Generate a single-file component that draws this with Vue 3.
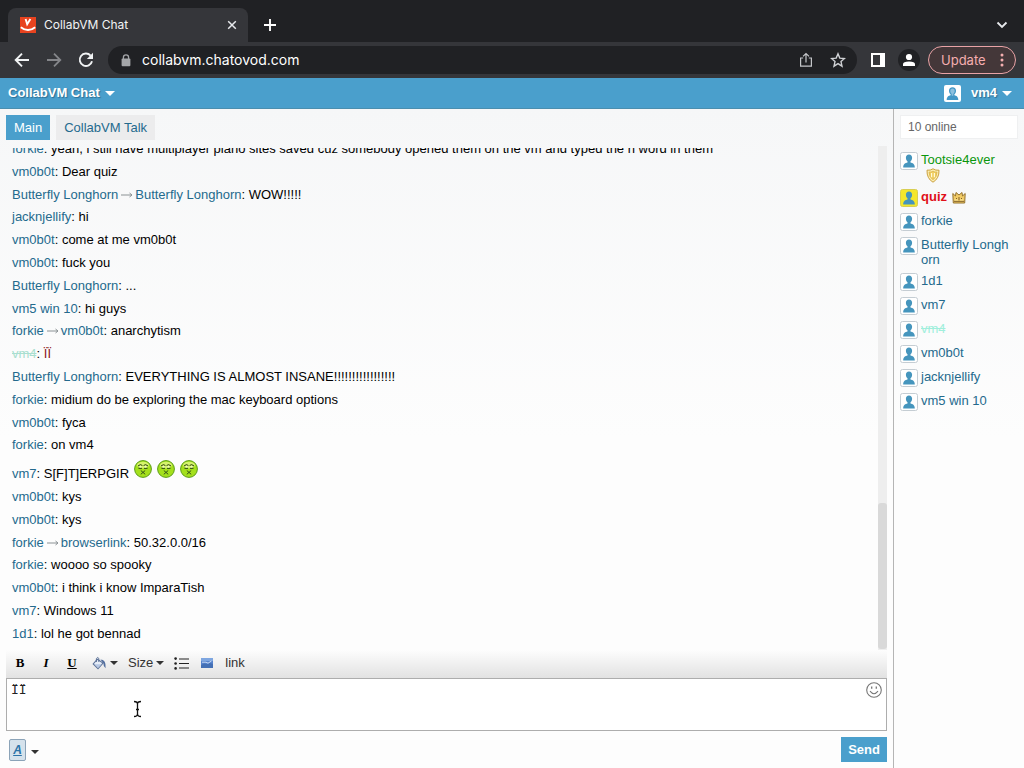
<script setup>
import { ref } from 'vue'

const messages = [
  { from: 'forkie', text: 'yeah, i still have multiplayer piano sites saved cuz somebody opened them on the vm and typed the n word in them' },
  { from: 'vm0b0t', text: 'Dear quiz' },
  { from: 'Butterfly Longhorn', to: 'Butterfly Longhorn', text: 'WOW!!!!!' },
  { from: 'jacknjellify', text: 'hi' },
  { from: 'vm0b0t', text: 'come at me vm0b0t' },
  { from: 'vm0b0t', text: 'fuck you' },
  { from: 'Butterfly Longhorn', text: '...' },
  { from: 'vm5 win 10', text: 'hi guys' },
  { from: 'forkie', to: 'vm0b0t', text: 'anarchytism' },
  { from: 'vm4', text: 'ÏÏ', self: true },
  { from: 'Butterfly Longhorn', text: 'EVERYTHING IS ALMOST INSANE!!!!!!!!!!!!!!!!!' },
  { from: 'forkie', text: 'midium do be exploring the mac keyboard options' },
  { from: 'vm0b0t', text: 'fyca' },
  { from: 'forkie', text: 'on vm4' },
  { from: 'vm7', text: 'S[F]T]ERPGIR', smileys: 3 },
  { from: 'vm0b0t', text: 'kys' },
  { from: 'vm0b0t', text: 'kys' },
  { from: 'forkie', to: 'browserlink', text: '50.32.0.0/16' },
  { from: 'forkie', text: 'woooo so spooky' },
  { from: 'vm0b0t', text: 'i think i know ImparaTish' },
  { from: 'vm7', text: 'Windows 11' },
  { from: '1d1', text: 'lol he got bennad' }
]

const users = [
  { name: 'Tootsie4ever', role: 'moderator' },
  { name: 'quiz', role: 'owner' },
  { name: 'forkie' },
  { name: 'Butterfly Longhorn' },
  { name: '1d1' },
  { name: 'vm7' },
  { name: 'vm4', role: 'self' },
  { name: 'vm0b0t' },
  { name: 'jacknjellify' },
  { name: 'vm5 win 10' }
]

const draft = ref('ÏÏ')
const filter = ref('')
const address = ref('collabvm.chatovod.com')
</script>

<template>
  <div class="window">
    <header class="browser">
      <div class="tabstrip">
        <div class="tab">
          <svg class="favicon" viewBox="0 0 16 16" aria-hidden="true">
            <rect width="16" height="16" fill="#e8431f" />
            <path d="M5.6 2 7.2 7.2 10.4 2" fill="none" stroke="#fff" stroke-width="1.9" />
            <path d="M.8 10.2Q8 16 15.2 10.200" fill="none" stroke="#fff" stroke-width="1.9" />
          </svg>
          <span class="tab-title">CollabVM Chat</span>
          <button class="plain" aria-label="Close tab">
            <svg width="10" height="10" viewBox="0 0 10 10"><path d="M1.2 1.2 8.8 8.8M8.8 1.2 1.2 8.8" stroke="#e8eaed" stroke-width="1.5" /></svg>
          </button>
        </div>
        <button class="plain new-tab" aria-label="New tab">
          <svg width="14" height="14" viewBox="0 0 14 14"><path d="M7 1V13M1 7H13" stroke="#fff" stroke-width="1.9" /></svg>
        </button>
        <button class="plain tab-search" aria-label="Search tabs">
          <svg width="12" height="8" viewBox="0 0 12 8"><path d="M1.5 1.5 6 6 10.5 1.5" fill="none" stroke="#e8eaed" stroke-width="1.8" /></svg>
        </button>
      </div>
      <div class="toolbar">
        <button class="plain" aria-label="Back">
          <svg width="16" height="16" viewBox="0 0 16 16"><path d="M15 8H2M8 1.7 1.7 8 8 14.3" fill="none" stroke="#f1f3f4" stroke-width="1.9" /></svg>
        </button>
        <button class="plain" aria-label="Forward">
          <svg width="16" height="16" viewBox="0 0 16 16"><path d="M1 8H14M8 1.7 14.3 8 8 14.3" fill="none" stroke="#85868a" stroke-width="1.8" /></svg>
        </button>
        <button class="plain" aria-label="Reload">
          <svg width="16" height="16" viewBox="0 0 16 16"><path d="M12.6 3.6A6.2 6.2 0 1 0 14 9.2" fill="none" stroke="#f1f3f4" stroke-width="1.9" /><path d="M15 .8V7H8.8Z" fill="#f1f3f4" /></svg>
        </button>
        <div class="omnibox">
          <svg width="10" height="13" viewBox="0 0 10 13"><path d="M2.4 5V3.4a2.6 2.6 0 0 1 5.2 0V5" fill="none" stroke="#a4a6a9" stroke-width="1.3" /><rect x=".6" y="4.6" width="8.8" height="7.6" rx="1" fill="#a4a6a9" /></svg>
          <input v-model="address" aria-label="Address">
          <button class="plain" aria-label="Share">
            <svg width="14" height="16" viewBox="0 0 14 16"><path d="M4.2 6H1.6V14.2H12.4V6H9.8M7 10.5V1.8M4 4.4 7 1.5 10 4.4" fill="none" stroke="#c4c6c9" stroke-width="1.2" /></svg>
          </button>
          <button class="plain" aria-label="Bookmark">
            <svg width="16" height="16" viewBox="0 0 16 16"><path d="M8 1.8 9.8 6.1 14.5 6.5 11 9.6 12 14.2 8 11.7 4 14.2 5 9.6 1.5 6.5 6.2 6.1Z" fill="none" stroke="#d0d2d5" stroke-width="1.4" /></svg>
          </button>
        </div>
        <button class="plain" aria-label="Side panel">
          <svg width="14" height="14" viewBox="0 0 14 14"><path fill-rule="evenodd" d="M0 0H14V14H0ZM2 2V12H9V2Z" fill="#fff" /></svg>
        </button>
        <button class="plain profile" aria-label="Profile">
          <svg width="14" height="14" viewBox="0 0 14 14"><circle cx="7" cy="4" r="3.1" fill="#fff" /><path d="M1 13V11.2Q1 8.4 7 8.4T13 11.2V13Z" fill="#fff" /></svg>
        </button>
        <button class="update">
          <span>Update</span>
          <svg width="4" height="14" viewBox="0 0 4 14" fill="#f5aeb0"><circle cx="2" cy="2" r="1.5" /><circle cx="2" cy="7" r="1.5" /><circle cx="2" cy="12" r="1.5" /></svg>
        </button>
      </div>
    </header>

    <nav class="site-bar">
      <button class="site-menu">CollabVM Chat<i class="caret"></i></button>
      <button class="site-menu">
        <svg class="account" viewBox="0 0 17 17"><rect width="17" height="17" rx="2" fill="#fff" /><path d="M8.500 2.200c2.200 0 3.500 1.400 3.500 3.500 0 1.800-.8 2.900-1.600 3.500v1c2 .6 3.900 1.300 3.900 4.800H2.700c0-3.500 1.900-4.200 3.900-4.800v-1C5.800 8.600 5 7.500 5 5.700c0-2.100 1.300-3.500 3.500-3.500Z" fill="#4297c6" /><path d="M8.500 3.600c1.400 0 2.200.9 2.200 2.300 0 1.500-.8 2.500-1.400 2.900v2H7.700v-2c-.6-.4-1.400-1.400-1.400-2.900 0-1.400.8-2.300 2.200-2.300Z" fill="#8cc0de" /></svg>
        vm4<i class="caret"></i>
      </button>
    </nav>

    <div class="content">
      <main class="chat">
        <div class="rooms">
          <a class="room active" href="#main">Main</a>
          <a class="room" href="#talk">CollabVM Talk</a>
        </div>

        <section class="log">
          <div class="viewport">
            <ol class="messages">
              <li v-for="(m, i) in messages" :key="i" :class="{ self: m.self }">
                <a class="nick" href="#">{{ m.from }}</a><template v-if="m.to"><svg class="arrow" viewBox="0 0 17 8"><path d="M3 4H14M11.500 2 14 4 11.500 6" fill="none" stroke="#8b9295" stroke-width="1" /></svg><a class="nick" href="#">{{ m.to }}</a></template>: <span class="text">{{ m.text }}</span>
                <svg v-for="n in m.smileys" :key="n" class="smiley" viewBox="0 0 18 18">
                  <circle cx="9" cy="9" r="8.4" fill="#a4e01c" stroke="#5c9d18" stroke-width="1" />
                  <ellipse cx="9" cy="5" rx="6" ry="3.3" fill="#d5f36c" />
                  <path d="M4 6Q6.500 3.500 8.400 5.500M14 6Q11.500 3.500 9.600 5.500M4.500 8.300H8M10 8.300H13.500" fill="none" stroke="#263c10" stroke-width="1" />
                  <path d="M5.500 6.900H7.500M10.500 6.900H12.500" stroke="#f6ffd8" stroke-width="1.200" />
                  <path d="M6.800 10.500 11.200 14.300M11.200 10.500 6.800 14.300" stroke="#33521a" stroke-width="1" />
                </svg>
              </li>
            </ol>
          </div>
          <div class="scrollbar"><div class="thumb"></div></div>
        </section>

        <form class="composer" @submit.prevent>
          <div class="format-bar">
            <button type="button" class="plain glyph bold">B</button>
            <button type="button" class="plain glyph italic">I</button>
            <button type="button" class="plain glyph underline">U</button>
            <button type="button" class="plain menu paint" aria-label="Text colour">
              <svg width="15" height="14" viewBox="0 0 15 14"><path d="M5.4 3.2 1.2 8 6 12.6 11 7Z" fill="#e6edf7" stroke="#5d7399" stroke-width="1.1" /><path d="M2.6 8.2H9.7L6 12Z" fill="#b7c8e4" /><path d="M4.4 6V2.6Q5.4.3 6.8 2.4V6" fill="none" stroke="#5d7399" stroke-width="1" /><path d="M8.4 3.4Q14.4 3.5 13.6 12.2 11.2 10.4 11.4 7.2Z" fill="#536f9f" /></svg>
              <i class="caret"></i>
            </button>
            <button type="button" class="plain menu size">Size<i class="caret"></i></button>
            <button type="button" class="plain list" aria-label="Bulleted list">
              <svg width="15" height="13" viewBox="0 0 15 13"><path d="M5 2H15M5 6.5H15M5 11H15" stroke="#222" stroke-width="1.2" /><circle cx="1.6" cy="1.6" r="1.3" fill="#222" /><circle cx="1.6" cy="6.5" r="1.3" fill="#222" /><circle cx="1.6" cy="11.4" r="1.3" fill="#222" /></svg>
            </button>
            <button type="button" class="plain image" aria-label="Image">
              <svg width="12" height="10" viewBox="0 0 12 10"><rect width="12" height="10" fill="#5683cd" /><rect width="12" height="3" fill="#7ea6e0" /><path d="M0 7 3.2 5.500 6 6.2 9 5 12 6V10H0Z" fill="#4470b5" /><path d="M1 4.2H5L7 5.2 10.5 3" fill="none" stroke="#d5e4f8" stroke-width=".9" /></svg>
            </button>
            <button type="button" class="plain link">link</button>
          </div>
          <div class="editor">
            <textarea v-model="draft" aria-label="Message" spellcheck="false"></textarea>
            <button type="button" class="plain emote" aria-label="Smileys">
              <svg width="16" height="16" viewBox="0 0 16 16"><circle cx="8" cy="8" r="7.3" fill="#fff" stroke="#777" stroke-width="1.1" /><path d="M5.7 4.6V6.8M10.3 4.6V6.8" stroke="#777" stroke-width="1.3" /><path d="M4 9.2Q8 14.2 12 9.2" fill="none" stroke="#777" stroke-width="1.1" /></svg>
            </button>
            <svg class="pointer" width="9" height="18" viewBox="0 0 9 18"><path d="M1 1.5Q4.5 1.5 4.5 4V14Q4.5 16.5 1 16.5M8 1.5Q4.5 1.5 4.5 4M4.5 14Q4.5 16.5 8 16.5M3 9.5H6" fill="none" stroke="#111" stroke-width="1.3" /></svg>
          </div>
          <div class="actions">
            <button type="button" class="style-toggle">A</button>
            <button type="button" class="plain" aria-label="Style options"><i class="caret"></i></button>
            <button type="submit" class="send">Send</button>
          </div>
        </form>
      </main>

      <aside class="people">
        <input v-model="filter" class="search" placeholder="10 online" aria-label="Filter users">
        <ul>
          <li v-for="u in users" :key="u.name" :class="u.role">
            <svg class="avatar" viewBox="0 0 18 18">
              <rect class="frame" x=".5" y=".5" width="17" height="17" rx="2" />
              <path d="M9 2.500c2 0 3.100 1.400 3.100 3.300 0 1.700-.8 2.900-1.600 3.500v1.100c2 .5 4.300 1.200 4.300 5.100H3.200c0-3.900 2.300-4.600 4.300-5.100V9.300c-.8-.6-1.600-1.800-1.600-3.500 0-1.900 1.100-3.300 3.100-3.300Z" fill="#4595bd" />
            </svg>
            <div class="who">
              <a href="#">{{ u.name }}</a><svg v-if="u.role === 'moderator'" class="badge" viewBox="0 0 14 15"><path d="M7 .8Q9.5 2.600 13 2.200 13.300 10.500 7 14.200.7 10.500 1 2.200 4.500 2.600 7 .8Z" fill="#fbeeb0" stroke="#cba040" stroke-width="1" /><path d="M7 3.200Q9 4.300 11 4.100 11 9 7 11.800 3 9 3 4.100 5 4.300 7 3.200Z" fill="#f0ce60" stroke="#d9ae43" stroke-width=".7" /><path d="M5.600 5V9.200M8.400 5V9.200" stroke="#fffbe0" stroke-width="1.100" /></svg><svg v-if="u.role === 'owner'" class="badge" viewBox="0 0 14 15"><path d="M1.300 13 .8 3.500 3.500 6 4 2.500 7 5 10 2.500 10.500 6 13.200 3.500 12.700 13Z" fill="#f1cb66" stroke="#94722d" stroke-width="1" /><path d="M2 11.300H12M4 8.500H5M9 8.500H10M7 7V10" stroke="#80612a" stroke-width="1" /><path d="M2.500 10H6M8 10H11.500" stroke="#fff0a8" stroke-width=".8" /></svg>
            </div>
          </li>
        </ul>
      </aside>
    </div>
  </div>
</template>

<style>
body {
  margin: 0;
  background: #fdfdfd;
}
</style>

<style scoped>
.window {
  display: flex;
  flex-direction: column;
  height: 100vh;
  overflow: hidden;
  font: 13px/16px "Liberation Sans", Arial, sans-serif;
  color: #000;
}
.window * { box-sizing: border-box; }
svg { flex: none; }
a { text-decoration: none; color: #246a8d; }
button, input, textarea { font: inherit; }
.plain {
  display: flex;
  align-items: center;
  padding: 0;
  border: 0;
  background: none;
  color: inherit;
}

/* browser */
.browser {
  flex: none;
  background: #202124;
  font-family: Inter, Roboto, sans-serif;
  color: #f1f3f4;
}
.tabstrip {
  display: flex;
  align-items: stretch;
  height: 42px;
  padding: 8px 16px 0 8px;
}
.tab {
  display: flex;
  align-items: center;
  gap: 8px;
  width: 240px;
  padding: 0 11px 0 12px;
  border-radius: 8px 8px 0 0;
  background: #35363a;
}
.favicon { width: 16px; height: 16px; }
.tab-title { flex: 1; font-size: 12px; }
.new-tab { margin-left: 15px; }
.tab-search { margin-left: auto; }
.toolbar {
  display: flex;
  align-items: center;
  gap: 16px;
  height: 36px;
  padding: 0 8px 0 14px;
  background: #35363a;
}
.omnibox {
  display: flex;
  flex: 1;
  align-items: center;
  height: 28px;
  margin: 0 -2px 0 -2px;
  padding: 0 11px 0 13px;
  gap: 17px;
  border-radius: 14px;
  background: #202124;
}
.omnibox input {
  flex: 1;
  min-width: 0;
  margin-left: -6px;
  padding: 0;
  border: 0;
  outline: 0;
  background: none;
  color: #fff;
  font-size: 14px;
}
.profile {
  justify-content: center;
  width: 22px;
  height: 22px;
  margin: 0 -8px 0 -3px;
  border-radius: 50%;
  background: #202124;
}
.update {
  display: flex;
  align-items: center;
  justify-content: space-between;
  width: 88px;
  height: 28px;
  padding: 0 11px 0 12px;
  border: 1px solid #e9a3a6;
  border-radius: 14px;
  background: #443739;
  color: #f5aeb0;
  font-size: 13px;
}

/* site bar */
.site-bar {
  display: flex;
  flex: none;
  align-items: center;
  justify-content: space-between;
  height: 31px;
  padding: 0 12px 0 8px;
  border-bottom: 1px solid #4b8eae;
  background: #4a9fcc;
}
.site-menu {
  display: flex;
  align-items: center;
  padding: 0;
  border: 0;
  background: none;
  color: #fff;
  font-weight: bold;
  text-shadow: 1px 1px 1px #2d6f94;
}
.account { width: 17px; height: 17px; margin-right: 10px; }
.caret {
  display: block;
  width: 0;
  height: 0;
  border: 4px solid transparent;
  border-top-color: currentColor;
  border-bottom: 0;
}
.site-menu .caret { margin-left: 5px; border-width: 5px 5px 0; }

/* chat */
.content {
  display: flex;
  flex: 1;
  min-height: 0;
  background: linear-gradient(#f6f7f8, #fdfdfd 50%);
}
.chat {
  display: flex;
  flex: 1;
  flex-direction: column;
  min-width: 0;
  padding: 6px 6px 0;
}
.rooms { display: flex; gap: 6px; }
.room {
  padding: 5px 8px 4px;
  background: #ececed;
}
.room.active { background: #4a9fcc; color: #fff; }
.log {
  display: flex;
  flex: 1;
  min-height: 0;
  margin-top: 6px;
}
.viewport {
  display: flex;
  flex: 1;
  min-width: 0;
  margin-top: 2px;
  overflow: hidden;
}
.messages {
  display: flex;
  flex: 1;
  flex-direction: column;
  justify-content: space-between;
  margin: -7px 0 0;
  padding: 0 6px 8px;
  list-style: none;
}
.self .nick { color: #a9dfd0; text-decoration: line-through; }
.self .text { color: #8b1518; }
.arrow { width: 17px; height: 8px; }
.smiley { width: 18px; height: 18px; margin-left: 5px; }
.scrollbar {
  display: flex;
  align-items: flex-end;
  width: 9px;
  padding-bottom: 1px;
  background: #eeeeee;
}
.thumb {
  width: 9px;
  height: 29%;
  border-radius: 3px;
  background: #d9d9d9;
}

/* composer */
.format-bar {
  display: flex;
  align-items: center;
  height: 28px;
  padding: 0 8px 2px;
  background: linear-gradient(#fdfdfd, #e2e2e2);
  color: #333;
}
.glyph {
  justify-content: center;
  width: 12px;
  margin-right: 14px;
  color: #000;
  font: bold 13px/16px "Liberation Serif", "Times New Roman", serif;
}
.italic { font-style: italic; }
.underline { text-decoration: underline; }
.menu { gap: 3px; }
.paint { margin-right: 10px; }
.size { margin-right: 10px; }
.list { margin-right: 12px; }
.image { margin-right: 12px; }
.editor {
  position: relative;
  display: flex;
  height: 53px;
  border: 1px solid #adadad;
  background: #fff;
}
.editor textarea {
  flex: 1;
  padding: 4px 4px;
  border: 0;
  outline: 0;
  resize: none;
  background: none;
  color: #222;
  font: 13px/16px "Liberation Mono", monospace;
}
.emote { position: absolute; top: 3px; right: 4px; }
.pointer { position: absolute; top: 21px; left: 126px; }
.actions {
  display: flex;
  align-items: center;
  height: 37px;
  padding-left: 3px;
  color: #333;
}
.actions .caret { margin: 4px 0 0 5px; }
.style-toggle {
  width: 17px;
  height: 22px;
  padding: 0;
  border: 1px solid #8ba3b8;
  border-radius: 2px;
  background: #d5e2ec;
  color: #2b73a8;
  font: italic bold 12px/16px "Liberation Sans", Arial, sans-serif;
  text-decoration: underline;
}
.send {
  height: 25px;
  margin-left: auto;
  padding: 0 7px;
  border: 0;
  background: #4a9fcc;
  color: #fff;
  font-weight: bold;
}

/* people */
.people {
  flex: none;
  width: 131px;
  padding: 6px 6px 0;
  border-left: 1px solid #b5b5b5;
}
.search {
  display: block;
  width: 100%;
  height: 24px;
  padding: 0 7px;
  border: 1px solid #eff0f1;
  background: #fff;
  font-size: 12px;
}
.search::placeholder { color: #666; }
.people ul {
  margin: 13px 0 0;
  padding: 0;
  list-style: none;
}
.people li {
  display: flex;
  gap: 3px;
  min-height: 24px;
  padding-bottom: 6px;
  line-height: 15px;
}
.avatar { width: 18px; height: 18px; }
.frame { fill: #fff; stroke: #c5cdd3; }
.owner .frame { fill: #f4e72c; stroke: #d8ce54; }
.who { flex: 1; min-width: 0; padding-right: 6px; word-break: break-all; }
.moderator a { color: #0a960c; }
.owner a { color: #e0101a; font-weight: bold; }
.people .self a { color: #a0efdc; text-decoration: line-through; }
.badge { width: 14px; height: 15px; margin-left: 5px; vertical-align: middle; }
</style>
